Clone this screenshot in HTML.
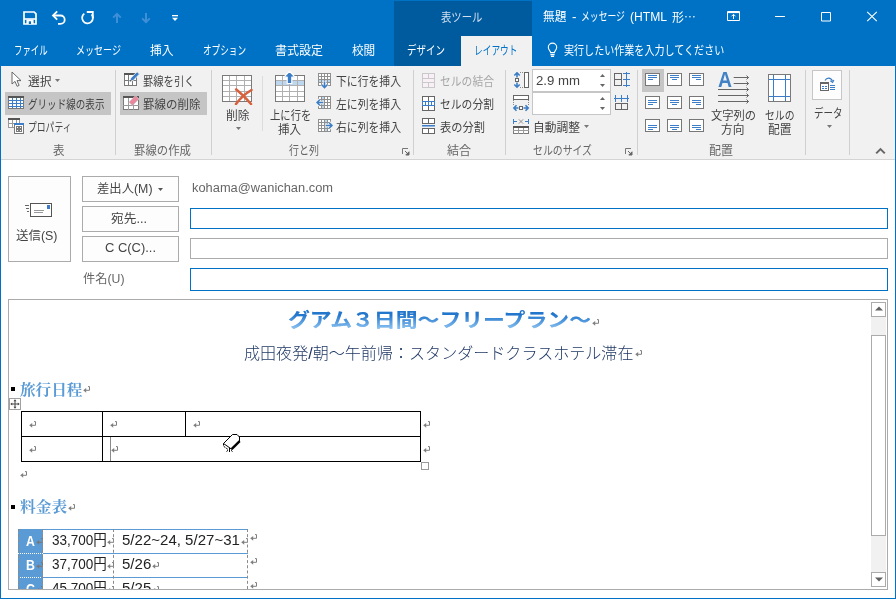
<!DOCTYPE html><html lang="ja"><head><meta charset="utf-8"><title>無題 - メッセージ (HTML 形式)</title><style>

html,body{margin:0;padding:0;}
body{width:896px;height:599px;overflow:hidden;background:#fff;position:relative;font-family:"Liberation Sans","Noto Sans CJK JP",sans-serif;}
.a{position:absolute;display:block;}
.t{position:absolute;white-space:nowrap;transform-origin:0 50%;font-feature-settings:"palt" 1;}

</style></head><body>
<div id="window-chrome">
<div class="a" style="left:0px;top:0px;width:896px;height:66px;background:#0072c6;"></div>
<div class="a" style="left:394px;top:1px;width:138px;height:65px;background:#005a9e;"></div>
<div class="a" style="left:0px;top:66px;width:896px;height:93px;background:#f1f1f1;"></div>
<div class="a" style="left:0px;top:159px;width:896px;height:1px;background:#d4d4d4;"></div>
<div class="a" style="left:461px;top:36px;width:71px;height:30px;background:#f1f1f1;"></div>
<div class="a" style="left:0px;top:66px;width:1px;height:533px;background:#0072c6;"></div>
<div class="a" style="left:895px;top:66px;width:1px;height:533px;background:#0072c6;"></div>
<div class="a" style="left:0px;top:598px;width:896px;height:1px;background:#0072c6;"></div>
</div>
<header id="titlebar">
<span class="t" style="left:441px;top:9.50px;font:400 12px/16px &quot;Liberation Sans&quot;,&quot;Noto Sans CJK JP&quot;,sans-serif;color:#cfe0f0;transform:scaleX(0.8643);">表ツール</span>
<span class="t" style="left:543px;top:9.00px;font:400 12px/16px &quot;Liberation Sans&quot;,&quot;Noto Sans CJK JP&quot;,sans-serif;color:#ffffff;transform:scaleX(0.9785);">無題</span>
<span class="t" style="left:571.5px;top:9.00px;font:400 12px/16px &quot;Liberation Sans&quot;,&quot;Noto Sans CJK JP&quot;,sans-serif;color:#ffffff;transform:scaleX(1.1250);">-</span>
<span class="t" style="left:580.6px;top:9.00px;font:400 12px/16px &quot;Liberation Sans&quot;,&quot;Noto Sans CJK JP&quot;,sans-serif;color:#ffffff;transform:scaleX(0.7345);">メッセージ</span>
<span class="t" style="left:630px;top:9.00px;font:400 12px/16px &quot;Liberation Sans&quot;,&quot;Noto Sans CJK JP&quot;,sans-serif;color:#ffffff;transform:scaleX(1.0089);">(HTML</span>
<span class="t" style="left:672.2px;top:9.00px;font:400 12px/16px &quot;Liberation Sans&quot;,&quot;Noto Sans CJK JP&quot;,sans-serif;color:#ffffff;transform:scaleX(0.9904);">形<span style="font-family:'Noto Sans CJK JP',sans-serif">…</span></span>
<svg class="a" style="left:23px;top:11px;" width="14" height="14" viewBox="0 0 14 14"><path d="M1 1h10.2L13 2.8V13H1z" fill="none" stroke="#fff" stroke-width="1.7" /><path d="M1 7.2h12v1.6H1z" fill="#fff"/><path d="M3.4 8.5h7.2V13H3.4z" fill="#fff"/><rect x="5.8" y="10.3" width="2.2" height="2.7" fill="#0072c6"/></svg>
<svg class="a" style="left:51px;top:10px;" width="16" height="15" viewBox="0 0 16 15"><path d="M2.2 5.5h7.3a4.2 4.2 0 0 1 0 8.4H7" fill="none" stroke="#fff" stroke-width="1.8" /><path d="M6.2 1.3L2 5.5l4.2 4.2" fill="none" stroke="#fff" stroke-width="1.8" /></svg>
<svg class="a" style="left:80px;top:10px;" width="16" height="16" viewBox="0 0 16 16"><path d="M4.3 3.6A5.4 5.4 0 1 0 11.6 4.4" fill="none" stroke="#fff" stroke-width="1.8" /><path d="M6.8 2h6v6" fill="none" stroke="#fff" stroke-width="1.8" /></svg>
<svg class="a" style="left:112px;top:12px;" width="10" height="12" viewBox="0 0 10 12"><path d="M5 11V1.8M1.2 5.6l3.8-3.8 3.8 3.8" fill="none" stroke="#3f8fd6" stroke-width="2" /></svg>
<svg class="a" style="left:141px;top:12px;" width="10" height="12" viewBox="0 0 10 12"><path d="M5 1v9.2M1.2 6.4l3.8 3.8 3.8-3.8" fill="none" stroke="#3f8fd6" stroke-width="2" /></svg>
<svg class="a" style="left:171px;top:14px;" width="8" height="8" viewBox="0 0 8 8"><rect x="1" y="1" width="6" height="1.3" fill="#fff"/><path d="M1 3.8h6L4 7z" fill="#fff"/></svg>
<svg class="a" style="left:726px;top:10px;" width="15" height="12" viewBox="0 0 15 12"><path d="M1.5 1.5h12v9h-12z" fill="none" stroke="#fff" stroke-width="1" /><path d="M1 2.5h13" fill="none" stroke="#fff" stroke-width="1.2" /><path d="M7.5 9V4.5M5.5 6.3l2-2 2 2" fill="none" stroke="#fff" stroke-width="1" /></svg>
<div class="a" style="left:775px;top:16px;width:10px;height:1px;background:#fff;"></div>
<svg class="a" style="left:820px;top:11px;" width="12" height="11" viewBox="0 0 12 11"><path d="M1.5 1.5h9v8.5h-9z" fill="none" stroke="#fff" stroke-width="1" /></svg>
<svg class="a" style="left:866px;top:11px;" width="12" height="11" viewBox="0 0 12 11"><path d="M1.2 .8l9.6 9.4M10.8 .8L1.2 10.2" fill="none" stroke="#fff" stroke-width="1.1" /></svg>
</header>
<nav id="ribbon-tabs">
<span class="t" style="left:13.75px;top:43.00px;font:400 12px/16px &quot;Liberation Sans&quot;,&quot;Noto Sans CJK JP&quot;,sans-serif;color:#ffffff;transform:scaleX(0.7029);">ファイル</span>
<span class="t" style="left:76px;top:43.00px;font:400 12px/16px &quot;Liberation Sans&quot;,&quot;Noto Sans CJK JP&quot;,sans-serif;color:#ffffff;transform:scaleX(0.7529);">メッセージ</span>
<span class="t" style="left:149.5px;top:43.00px;font:400 12px/16px &quot;Liberation Sans&quot;,&quot;Noto Sans CJK JP&quot;,sans-serif;color:#ffffff;transform:scaleX(0.9785);">挿入</span>
<span class="t" style="left:203px;top:43.00px;font:400 12px/16px &quot;Liberation Sans&quot;,&quot;Noto Sans CJK JP&quot;,sans-serif;color:#ffffff;transform:scaleX(0.7165);">オプション</span>
<span class="t" style="left:275px;top:43.00px;font:400 12px/16px &quot;Liberation Sans&quot;,&quot;Noto Sans CJK JP&quot;,sans-serif;color:#ffffff;transform:scaleX(0.9997);">書式設定</span>
<span class="t" style="left:351.75px;top:43.00px;font:400 12px/16px &quot;Liberation Sans&quot;,&quot;Noto Sans CJK JP&quot;,sans-serif;color:#ffffff;transform:scaleX(0.9681);">校閲</span>
<span class="t" style="left:407px;top:43.00px;font:400 12px/16px &quot;Liberation Sans&quot;,&quot;Noto Sans CJK JP&quot;,sans-serif;color:#ffffff;transform:scaleX(0.7914);">デザイン</span>
<span class="t" style="left:474px;top:43.00px;font:400 12px/16px &quot;Liberation Sans&quot;,&quot;Noto Sans CJK JP&quot;,sans-serif;color:#0072c6;transform:scaleX(0.7248);">レイアウト</span>
<span class="t" style="left:563.75px;top:43.00px;font:400 12px/16px &quot;Liberation Sans&quot;,&quot;Noto Sans CJK JP&quot;,sans-serif;color:#ffffff;transform:scaleX(0.8377);">実行したい作業を入力してください</span>
<svg class="a" style="left:547px;top:42px;" width="11" height="16" viewBox="0 0 11 16"><path d="M3.6 10.6c0-1.6-2.3-2.7-2.3-5.3a4.2 4.2 0 0 1 8.4 0c0 2.6-2.3 3.7-2.3 5.3z" fill="none" stroke="#fff" stroke-width="1.1" /><path d="M3.4 12.6h4.2M3.9 14.4h3.2" fill="none" stroke="#fff" stroke-width="1.1" /></svg>
</nav>
<section id="ribbon">
<div class="a" style="left:115px;top:70px;width:1px;height:85px;background:#d0d0d0;"></div>
<div class="a" style="left:211px;top:70px;width:1px;height:85px;background:#d0d0d0;"></div>
<div class="a" style="left:413px;top:70px;width:1px;height:85px;background:#d0d0d0;"></div>
<div class="a" style="left:505px;top:70px;width:1px;height:85px;background:#d0d0d0;"></div>
<div class="a" style="left:637px;top:70px;width:1px;height:85px;background:#d0d0d0;"></div>
<div class="a" style="left:805px;top:70px;width:1px;height:85px;background:#d0d0d0;"></div>
<div class="a" style="left:849px;top:70px;width:1px;height:85px;background:#d0d0d0;"></div>
<div class="a" style="left:262px;top:76px;width:1px;height:55px;background:#dcdcdc;"></div>
<div class="a" style="left:5px;top:92px;width:106px;height:23px;background:#c5c5c5;"></div>
<div class="a" style="left:120px;top:92px;width:87px;height:23px;background:#c5c5c5;"></div>
<div class="a" style="left:642px;top:69px;width:22px;height:23px;background:#c5c5c5;"></div>
<span class="t" style="left:27.5px;top:74.00px;font:400 12px/16px &quot;Liberation Sans&quot;,&quot;Noto Sans CJK JP&quot;,sans-serif;color:#444444;transform:scaleX(0.9785);">選択</span>
<span class="t" style="left:27.5px;top:97.00px;font:400 12px/16px &quot;Liberation Sans&quot;,&quot;Noto Sans CJK JP&quot;,sans-serif;color:#444444;transform:scaleX(0.7967);">グリッド線の表示</span>
<span class="t" style="left:27.5px;top:119.50px;font:400 12px/16px &quot;Liberation Sans&quot;,&quot;Noto Sans CJK JP&quot;,sans-serif;color:#444444;transform:scaleX(0.7338);">プロパティ</span>
<span class="t" style="left:52.5px;top:143.00px;font:400 12px/16px &quot;Liberation Sans&quot;,&quot;Noto Sans CJK JP&quot;,sans-serif;color:#666666;transform:scaleX(0.9571);">表</span>
<span class="t" style="left:142.5px;top:74.00px;font:400 12px/16px &quot;Liberation Sans&quot;,&quot;Noto Sans CJK JP&quot;,sans-serif;color:#444444;transform:scaleX(0.8581);">罫線を引く</span>
<span class="t" style="left:142.5px;top:97.00px;font:400 12px/16px &quot;Liberation Sans&quot;,&quot;Noto Sans CJK JP&quot;,sans-serif;color:#444444;transform:scaleX(0.9581);">罫線の削除</span>
<span class="t" style="left:134px;top:143.00px;font:400 12px/16px &quot;Liberation Sans&quot;,&quot;Noto Sans CJK JP&quot;,sans-serif;color:#666666;transform:scaleX(0.9498);">罫線の作成</span>
<span class="t" style="left:225.5px;top:107.50px;font:400 12px/16px &quot;Liberation Sans&quot;,&quot;Noto Sans CJK JP&quot;,sans-serif;color:#444444;transform:scaleX(0.9785);">削除</span>
<span class="t" style="left:269.6px;top:108.00px;font:400 12px/16px &quot;Liberation Sans&quot;,&quot;Noto Sans CJK JP&quot;,sans-serif;color:#444444;transform:scaleX(0.8622);">上に行を</span>
<span class="t" style="left:278px;top:121.50px;font:400 12px/16px &quot;Liberation Sans&quot;,&quot;Noto Sans CJK JP&quot;,sans-serif;color:#444444;transform:scaleX(0.9577);">挿入</span>
<span class="t" style="left:336px;top:74.00px;font:400 12px/16px &quot;Liberation Sans&quot;,&quot;Noto Sans CJK JP&quot;,sans-serif;color:#444444;transform:scaleX(0.9026);">下に行を挿入</span>
<span class="t" style="left:336px;top:97.00px;font:400 12px/16px &quot;Liberation Sans&quot;,&quot;Noto Sans CJK JP&quot;,sans-serif;color:#444444;transform:scaleX(0.9026);">左に列を挿入</span>
<span class="t" style="left:336px;top:119.50px;font:400 12px/16px &quot;Liberation Sans&quot;,&quot;Noto Sans CJK JP&quot;,sans-serif;color:#444444;transform:scaleX(0.9026);">右に列を挿入</span>
<span class="t" style="left:289px;top:143.00px;font:400 12px/16px &quot;Liberation Sans&quot;,&quot;Noto Sans CJK JP&quot;,sans-serif;color:#666666;transform:scaleX(0.8330);">行と列</span>
<span class="t" style="left:440px;top:74.00px;font:400 12px/16px &quot;Liberation Sans&quot;,&quot;Noto Sans CJK JP&quot;,sans-serif;color:#a6a6a6;transform:scaleX(0.8998);">セルの結合</span>
<span class="t" style="left:440px;top:97.00px;font:400 12px/16px &quot;Liberation Sans&quot;,&quot;Noto Sans CJK JP&quot;,sans-serif;color:#444444;transform:scaleX(0.8998);">セルの分割</span>
<span class="t" style="left:440px;top:119.50px;font:400 12px/16px &quot;Liberation Sans&quot;,&quot;Noto Sans CJK JP&quot;,sans-serif;color:#444444;transform:scaleX(0.9372);">表の分割</span>
<span class="t" style="left:447px;top:143.00px;font:400 12px/16px &quot;Liberation Sans&quot;,&quot;Noto Sans CJK JP&quot;,sans-serif;color:#666666;transform:scaleX(0.9993);">結合</span>
<div class="a" style="left:532px;top:69px;width:79px;height:23px;background:#ffffff;border:1px solid #c6c6c6;box-sizing:border-box;"></div>
<div class="a" style="left:532px;top:92px;width:79px;height:23px;background:#ffffff;border:1px solid #c6c6c6;box-sizing:border-box;"></div>
<span class="t" style="left:536px;top:73.00px;font:400 12px/16px &quot;Liberation Sans&quot;,&quot;Noto Sans CJK JP&quot;,sans-serif;color:#444444;transform:scaleX(1.0996);">2.9 mm</span>
<span class="t" style="left:532.5px;top:119.50px;font:400 12px/16px &quot;Liberation Sans&quot;,&quot;Noto Sans CJK JP&quot;,sans-serif;color:#444444;transform:scaleX(0.9788);">自動調整</span>
<span class="t" style="left:533px;top:143.00px;font:400 12px/16px &quot;Liberation Sans&quot;,&quot;Noto Sans CJK JP&quot;,sans-serif;color:#666666;transform:scaleX(0.8236);">セルのサイズ</span>
<span class="t" style="left:710.5px;top:108.00px;font:400 12px/16px &quot;Liberation Sans&quot;,&quot;Noto Sans CJK JP&quot;,sans-serif;color:#444444;transform:scaleX(0.9372);">文字列の</span>
<span class="t" style="left:721px;top:121.50px;font:400 12px/16px &quot;Liberation Sans&quot;,&quot;Noto Sans CJK JP&quot;,sans-serif;color:#444444;transform:scaleX(0.9785);">方向</span>
<span class="t" style="left:765px;top:108.00px;font:400 12px/16px &quot;Liberation Sans&quot;,&quot;Noto Sans CJK JP&quot;,sans-serif;color:#444444;transform:scaleX(0.8191);">セルの</span>
<span class="t" style="left:767.5px;top:121.50px;font:400 12px/16px &quot;Liberation Sans&quot;,&quot;Noto Sans CJK JP&quot;,sans-serif;color:#444444;transform:scaleX(0.9785);">配置</span>
<span class="t" style="left:709px;top:143.00px;font:400 12px/16px &quot;Liberation Sans&quot;,&quot;Noto Sans CJK JP&quot;,sans-serif;color:#666666;transform:scaleX(0.9993);">配置</span>
<div class="a" style="left:812px;top:70px;width:30px;height:30px;background:#fdfdfd;border:1px solid #c6c6c6;box-sizing:border-box;"></div>
<span class="t" style="left:814px;top:105.50px;font:400 12px/16px &quot;Liberation Sans&quot;,&quot;Noto Sans CJK JP&quot;,sans-serif;color:#444444;transform:scaleX(0.7913);">データ</span>
<svg class="a" style="left:11px;top:71px;" width="11" height="17" viewBox="0 0 11 17"><path d="M1 1v12l3-2.6 2.1 4.9 2-.9-2.1-4.8H10z" fill="#fff" stroke="#5a5a5a" stroke-width=".9" stroke-linejoin="round"/></svg>
<svg class="a" style="left:55px;top:79px;" width="5" height="3" viewBox="0 0 5 3"><path d="M0 0h5L2.5 3z" fill="#777777"/></svg>
<svg class="a" style="left:8px;top:96px;" width="16" height="13" viewBox="0 0 16 13"><g shape-rendering="crispEdges"><rect x=".5" y=".5" width="15" height="12" fill="#fff" stroke="#7a7a7a"/><rect x="0" y="0" width="16" height="2" fill="#555555"/><path d="M1 4.5h14M1 7.5h14M1 10.5h14M4.5 2v10M8.5 2v10M12.500 2v10" stroke="#3b7dc6" stroke-width="1"/></g></svg>
<svg class="a" style="left:8px;top:118px;" width="16" height="16" viewBox="0 0 16 16"><g shape-rendering="crispEdges"><rect x=".5" y=".5" width="11" height="9" fill="#fff" stroke="#9a9a9a"/><rect x="0" y="0" width="12" height="2" fill="#555555"/><path d="M4.5 2v8M8.5 2v8M0 5.5h12" stroke="#9a9a9a"/><rect x="6.500" y="5.5" width="9" height="10" fill="#fff" stroke="#7a7a7a"/><rect x="6" y="5" width="10" height="2" fill="#3b7dc6"/><rect x="8.500" y="8.500" width="2" height="2" fill="none" stroke="#7a7a7a"/><rect x="11.500" y="8.500" width="2" height="2" fill="none" stroke="#7a7a7a"/><rect x="8.500" y="11.500" width="2" height="2" fill="none" stroke="#7a7a7a"/><rect x="11.500" y="11.500" width="2" height="2" fill="none" stroke="#7a7a7a"/></g></svg>
<svg class="a" style="left:124px;top:71px;" width="16" height="16" viewBox="0 0 16 16"><g shape-rendering="crispEdges"><rect x=".5" y="2.5" width="12" height="12" fill="#fff" stroke="#7a7a7a"/><rect x="0" y="2" width="13" height="2" fill="#555555"/><path d="M4.5 4v11M8.5 9v6M0 9.500h13" stroke="#7a7a7a"/></g><path d="M5.800 10.400l1-3.400 6.300-6.300 2.400 2.400-6.300 6.300z" fill="#3b7dc6" stroke="#f1f1f1" stroke-width=".9"/><path d="M5.800 10.400l.5-1.700 1.200 1.200z" fill="#444"/></svg>
<svg class="a" style="left:123px;top:95px;" width="17" height="16" viewBox="0 0 17 16"><g shape-rendering="crispEdges"><rect x=".5" y="1.5" width="15" height="13" fill="#fff" stroke="#7a7a7a"/><rect x="0" y="1" width="16" height="2" fill="#555555"/><path d="M5.500 3v12M10.500 9v6M0 10.500h16" stroke="#9a9a9a"/></g><path d="M6 7.200L12.600 .600l3.400 3.400L9.400 10.600z" fill="#e8899e" stroke="#c5c5c5" stroke-width=".7"/></svg>
<svg class="a" style="left:222px;top:75px;" width="32" height="30" viewBox="0 0 32 30"><g shape-rendering="crispEdges"><rect x=".5" y=".5" width="29" height="26" fill="#fff" stroke="#7a7a7a"/><path d="M7.5 1v25M14.5 1v25M22.5 1v25M1 5.5h28M1 10.5h28M1 16.5h28M1 21.5h28" stroke="#b0b0b0"/></g><path d="M14.2 14.500c4.500 3.500 9.500 8.500 14.800 14.500M29.500 15c-5.500 3.200-11 8-15.500 14" fill="none" stroke="#d8603c" stroke-width="2.600" stroke-linecap="round"/></svg>
<svg class="a" style="left:236px;top:127px;" width="5" height="3" viewBox="0 0 5 3"><path d="M0 0h5L2.5 3z" fill="#777777"/></svg>
<svg class="a" style="left:275px;top:71px;" width="30" height="31" viewBox="0 0 30 31"><g transform="translate(0,4)"><g shape-rendering="crispEdges"><rect x=".5" y=".5" width="29" height="26" fill="#fff" stroke="#7a7a7a"/><rect x="1" y="6.2" width="28" height="5" fill="#bdd7ee"/><path d="M7.5 1v25M14.5 1v25M22.5 1v25M1 5.5h28M1 10.5h28M1 16.5h28M1 21.5h28" stroke="#b0b0b0"/></g></g><path d="M14.500 .3l5.600 5.900h-3.300v6.300h-4.600V6.200H8.900z" fill="#3b7dc6" stroke="#fff" stroke-width="1.200" stroke-linejoin="round"/></svg>
<svg class="a" style="left:318px;top:73px;" width="14" height="16" viewBox="0 0 14 16"><g shape-rendering="crispEdges"><rect x="0" y="0" width="13" height="13" fill="#8f8f8f"/><rect x="1" y="1" width="2" height="2" fill="#fff"/><rect x="4" y="1" width="2" height="2" fill="#fff"/><rect x="7" y="1" width="2" height="2" fill="#fff"/><rect x="10" y="1" width="2" height="2" fill="#fff"/><rect x="1" y="4" width="2" height="2" fill="#fff"/><rect x="4" y="4" width="2" height="2" fill="#fff"/><rect x="7" y="4" width="2" height="2" fill="#fff"/><rect x="10" y="4" width="2" height="2" fill="#fff"/><rect x="1" y="7" width="2" height="2" fill="#bdd7ee"/><rect x="4" y="7" width="2" height="2" fill="#bdd7ee"/><rect x="7" y="7" width="2" height="2" fill="#bdd7ee"/><rect x="10" y="7" width="2" height="2" fill="#bdd7ee"/><rect x="1" y="10" width="2" height="2" fill="#fff"/><rect x="4" y="10" width="2" height="2" fill="#fff"/><rect x="7" y="10" width="2" height="2" fill="#fff"/><rect x="10" y="10" width="2" height="2" fill="#fff"/></g><path d="M6.500 8v6.500M3.700 11.800l2.800 2.800 2.800-2.800" fill="none" stroke="#f1f1f1" stroke-width="3.600"/><path d="M6.500 8.500v6M3.700 11.800l2.800 2.800 2.800-2.800" fill="none" stroke="#3b7dc6" stroke-width="1.500"/></svg>
<svg class="a" style="left:316px;top:96px;" width="16" height="13" viewBox="0 0 16 13"><g transform="translate(2,0)"><g shape-rendering="crispEdges"><rect x="0" y="0" width="13" height="13" fill="#8f8f8f"/><rect x="1" y="1" width="2" height="2" fill="#fff"/><rect x="4" y="1" width="2" height="2" fill="#bdd7ee"/><rect x="7" y="1" width="2" height="2" fill="#fff"/><rect x="10" y="1" width="2" height="2" fill="#fff"/><rect x="1" y="4" width="2" height="2" fill="#fff"/><rect x="4" y="4" width="2" height="2" fill="#bdd7ee"/><rect x="7" y="4" width="2" height="2" fill="#fff"/><rect x="10" y="4" width="2" height="2" fill="#fff"/><rect x="1" y="7" width="2" height="2" fill="#fff"/><rect x="4" y="7" width="2" height="2" fill="#bdd7ee"/><rect x="7" y="7" width="2" height="2" fill="#fff"/><rect x="10" y="7" width="2" height="2" fill="#fff"/><rect x="1" y="10" width="2" height="2" fill="#fff"/><rect x="4" y="10" width="2" height="2" fill="#bdd7ee"/><rect x="7" y="10" width="2" height="2" fill="#fff"/><rect x="10" y="10" width="2" height="2" fill="#fff"/></g></g><path d="M7.500 6.500H1M3.800 3.700L1 6.500l2.800 2.800" fill="none" stroke="#f1f1f1" stroke-width="3.600"/><path d="M7 6.500H1M3.800 3.700L1 6.500l2.800 2.800" fill="none" stroke="#3b7dc6" stroke-width="1.500"/></svg>
<svg class="a" style="left:318px;top:119px;" width="16" height="13" viewBox="0 0 16 13"><g shape-rendering="crispEdges"><rect x="0" y="0" width="13" height="13" fill="#8f8f8f"/><rect x="1" y="1" width="2" height="2" fill="#fff"/><rect x="4" y="1" width="2" height="2" fill="#fff"/><rect x="7" y="1" width="2" height="2" fill="#bdd7ee"/><rect x="10" y="1" width="2" height="2" fill="#fff"/><rect x="1" y="4" width="2" height="2" fill="#fff"/><rect x="4" y="4" width="2" height="2" fill="#fff"/><rect x="7" y="4" width="2" height="2" fill="#bdd7ee"/><rect x="10" y="4" width="2" height="2" fill="#fff"/><rect x="1" y="7" width="2" height="2" fill="#fff"/><rect x="4" y="7" width="2" height="2" fill="#fff"/><rect x="7" y="7" width="2" height="2" fill="#bdd7ee"/><rect x="10" y="7" width="2" height="2" fill="#fff"/><rect x="1" y="10" width="2" height="2" fill="#fff"/><rect x="4" y="10" width="2" height="2" fill="#fff"/><rect x="7" y="10" width="2" height="2" fill="#bdd7ee"/><rect x="10" y="10" width="2" height="2" fill="#fff"/></g><path d="M7.500 6.500h6.500M11.200 3.700l2.800 2.800-2.800 2.800" fill="none" stroke="#f1f1f1" stroke-width="3.600"/><path d="M8 6.500h6M11.200 3.700l2.800 2.800-2.800 2.800" fill="none" stroke="#3b7dc6" stroke-width="1.500"/></svg>
<svg class="a" style="left:422px;top:73px;" width="13" height="15" viewBox="0 0 13 15"><g shape-rendering="crispEdges"><rect x=".5" y=".5" width="12" height="14" fill="#f8f0f6" stroke="#c9c9c9"/><path d="M0 5.500h13M0 9.500h13M6.500 0v5M6.500 10v5" stroke="#c9c9c9"/></g></svg>
<svg class="a" style="left:422px;top:96px;" width="13" height="15" viewBox="0 0 13 15"><g shape-rendering="crispEdges"><rect x=".5" y=".5" width="12" height="14" fill="#fff" stroke="#666"/><path d="M6.500 0v15" stroke="#666"/><rect x=".5" y="5.500" width="12" height="4" fill="#fff" stroke="#3b7dc6"/><path d="M3.500 6v4M6.500 6v4M9.500 6v4" stroke="#3b7dc6"/></g></svg>
<svg class="a" style="left:422px;top:118px;" width="13" height="16" viewBox="0 0 13 16"><g shape-rendering="crispEdges"><rect x=".5" y=".5" width="12" height="5" fill="#fff" stroke="#666"/><rect x=".5" y="10.500" width="12" height="5" fill="#fff" stroke="#666"/><path d="M6.500 0v6M6.500 10v6" stroke="#666"/><path d="M0 7.500h13" stroke="#3b7dc6" stroke-width="1"/><path d="M0 8.500h13" stroke="#8fb5e0" stroke-width="1"/></g></svg>
<svg class="a" style="left:513px;top:72px;" width="17" height="17" viewBox="0 0 17 17"><g shape-rendering="crispEdges"><rect x="11.500" y=".5" width="4" height="15" fill="#fff" stroke="#666"/><path d="M7 .5h4M7 15.500h4" stroke="#888" stroke-dasharray="1 1"/><rect x="2.500" y="6.500" width="3" height="3" fill="#fff" stroke="#666"/></g><path d="M4 1v4.500M1.300 3.500L4 .8l2.700 2.700M4 15v-4.500M1.300 12.500L4 15.200l2.700-2.700" fill="none" stroke="#3b7dc6" stroke-width="1.600"/></svg>
<svg class="a" style="left:513px;top:95px;" width="17" height="17" viewBox="0 0 17 17"><g shape-rendering="crispEdges"><rect x=".5" y=".5" width="15" height="4" fill="#fff" stroke="#666"/><path d="M.5 5v6M15.500 5v6" stroke="#888" stroke-dasharray="1 1"/><rect x="6.500" y="11.500" width="3" height="3" fill="#fff" stroke="#666"/></g><path d="M1 13h4.500M3.500 10.300L.8 13l2.700 2.700M15 13h-4.500M12.500 10.300l2.700 2.700-2.700 2.700" fill="none" stroke="#3b7dc6" stroke-width="1.600"/></svg>
<svg class="a" style="left:513px;top:118px;" width="17" height="16" viewBox="0 0 17 16"><g shape-rendering="crispEdges"><path d="M.5 1v5M15.500 1v5M0 3.500h4M12 3.500h4" stroke="#3b7dc6"/><rect x=".5" y="8.500" width="15" height="7" fill="#fff" stroke="#7a7a7a"/><rect x="0" y="8" width="16" height="2" fill="#555555"/><path d="M5.500 10v6M10.500 10v6M0 12.500h16" stroke="#9a9a9a"/></g><path d="M5.800 1.300l4.400 4.400M10.200 1.300L5.800 5.700" stroke="#888" stroke-width=".9"/></svg>
<svg class="a" style="left:584px;top:125px;" width="5" height="3" viewBox="0 0 5 3"><path d="M0 0h5L2.5 3z" fill="#777777"/></svg>
<svg class="a" style="left:600px;top:74px;" width="5" height="3" viewBox="0 0 5 3"><path d="M0 3h5L2.500 0z" fill="#666"/></svg>
<svg class="a" style="left:600px;top:84px;" width="5" height="3" viewBox="0 0 5 3"><path d="M0 0h5L2.500 3z" fill="#666"/></svg>
<svg class="a" style="left:600px;top:97px;" width="5" height="3" viewBox="0 0 5 3"><path d="M0 3h5L2.500 0z" fill="#666"/></svg>
<svg class="a" style="left:600px;top:107px;" width="5" height="3" viewBox="0 0 5 3"><path d="M0 0h5L2.500 3z" fill="#666"/></svg>
<svg class="a" style="left:614px;top:72px;" width="17" height="15" viewBox="0 0 17 15"><g shape-rendering="crispEdges"><rect x=".5" y="1.500" width="7" height="12" fill="#f1f1f1" stroke="#666"/><path d="M0 7.500h8" stroke="#666"/><path d="M12.500 0v15M9 1.500h7M9 7.500h7M9 13.500h7" stroke="#3b7dc6"/></g></svg>
<svg class="a" style="left:614px;top:95px;" width="15" height="16" viewBox="0 0 15 16"><g shape-rendering="crispEdges"><rect x="1.500" y="8.500" width="12" height="6" fill="#f1f1f1" stroke="#666"/><path d="M7.500 8v7" stroke="#666"/><path d="M0 3.500h15M1.500 0v7M7.500 0v7M13.500 0v7" stroke="#3b7dc6"/></g></svg>
<svg class="a" style="left:645px;top:73px;" width="15" height="13" viewBox="0 0 15 13"><g shape-rendering="crispEdges"><rect x=".5" y=".5" width="14" height="12" fill="#fff" stroke="#777"/><rect x="3" y="2" width="9" height="1" fill="#3b7dc6"/><rect x="3" y="4" width="9" height="1" fill="#3b7dc6"/><rect x="3" y="6" width="5" height="1" fill="#3b7dc6"/></g></svg>
<svg class="a" style="left:667px;top:73px;" width="15" height="13" viewBox="0 0 15 13"><g shape-rendering="crispEdges"><rect x=".5" y=".5" width="14" height="12" fill="#fff" stroke="#777"/><rect x="3" y="2" width="9" height="1" fill="#3b7dc6"/><rect x="3" y="4" width="9" height="1" fill="#3b7dc6"/><rect x="5" y="6" width="5" height="1" fill="#3b7dc6"/></g></svg>
<svg class="a" style="left:689px;top:73px;" width="15" height="13" viewBox="0 0 15 13"><g shape-rendering="crispEdges"><rect x=".5" y=".5" width="14" height="12" fill="#fff" stroke="#777"/><rect x="3" y="2" width="9" height="1" fill="#3b7dc6"/><rect x="3" y="4" width="9" height="1" fill="#3b7dc6"/><rect x="7" y="6" width="5" height="1" fill="#3b7dc6"/></g></svg>
<svg class="a" style="left:645px;top:96px;" width="15" height="13" viewBox="0 0 15 13"><g shape-rendering="crispEdges"><rect x=".5" y=".5" width="14" height="12" fill="#fff" stroke="#777"/><rect x="3" y="4" width="9" height="1" fill="#3b7dc6"/><rect x="3" y="6" width="9" height="1" fill="#3b7dc6"/><rect x="3" y="8" width="5" height="1" fill="#3b7dc6"/></g></svg>
<svg class="a" style="left:667px;top:96px;" width="15" height="13" viewBox="0 0 15 13"><g shape-rendering="crispEdges"><rect x=".5" y=".5" width="14" height="12" fill="#fff" stroke="#777"/><rect x="3" y="4" width="9" height="1" fill="#3b7dc6"/><rect x="3" y="6" width="9" height="1" fill="#3b7dc6"/><rect x="5" y="8" width="5" height="1" fill="#3b7dc6"/></g></svg>
<svg class="a" style="left:689px;top:96px;" width="15" height="13" viewBox="0 0 15 13"><g shape-rendering="crispEdges"><rect x=".5" y=".5" width="14" height="12" fill="#fff" stroke="#777"/><rect x="3" y="4" width="9" height="1" fill="#3b7dc6"/><rect x="3" y="6" width="9" height="1" fill="#3b7dc6"/><rect x="7" y="8" width="5" height="1" fill="#3b7dc6"/></g></svg>
<svg class="a" style="left:645px;top:119px;" width="15" height="13" viewBox="0 0 15 13"><g shape-rendering="crispEdges"><rect x=".5" y=".5" width="14" height="12" fill="#fff" stroke="#777"/><rect x="3" y="6" width="9" height="1" fill="#3b7dc6"/><rect x="3" y="8" width="9" height="1" fill="#3b7dc6"/><rect x="3" y="10" width="5" height="1" fill="#3b7dc6"/></g></svg>
<svg class="a" style="left:667px;top:119px;" width="15" height="13" viewBox="0 0 15 13"><g shape-rendering="crispEdges"><rect x=".5" y=".5" width="14" height="12" fill="#fff" stroke="#777"/><rect x="3" y="6" width="9" height="1" fill="#3b7dc6"/><rect x="3" y="8" width="9" height="1" fill="#3b7dc6"/><rect x="5" y="10" width="5" height="1" fill="#3b7dc6"/></g></svg>
<svg class="a" style="left:689px;top:119px;" width="15" height="13" viewBox="0 0 15 13"><g shape-rendering="crispEdges"><rect x=".5" y=".5" width="14" height="12" fill="#fff" stroke="#777"/><rect x="3" y="6" width="9" height="1" fill="#3b7dc6"/><rect x="3" y="8" width="9" height="1" fill="#3b7dc6"/><rect x="7" y="10" width="5" height="1" fill="#3b7dc6"/></g></svg>
<svg class="a" style="left:717px;top:70px;" width="34" height="34" viewBox="0 0 34 34"><path d="M16.700 7.500h15M16.700 13.500h15M1 19.500h30.700M1 25.500h30.700M1 31.500h30.700" stroke="#666" stroke-width="1"/><path d="M29.500 5.500l2 2-2 2M29.500 11.500l2 2-2 2M29.500 17.500l2 2-2 2M29.500 23.500l2 2-2 2M29.500 29.500l2 2-2 2" fill="none" stroke="#666" stroke-width="1"/></svg>
<span class="t" style="left:717.5px;top:67.75px;font:700 21.5px/25.5px &quot;Liberation Sans&quot;,&quot;Noto Sans CJK JP&quot;,sans-serif;color:#4381c5;transform:scaleX(0.9014);">A</span>
<svg class="a" style="left:768px;top:74px;" width="23" height="28" viewBox="0 0 23 28"><g shape-rendering="crispEdges"><rect x=".5" y=".5" width="22" height="27" fill="#fff" stroke="#7a7a7a"/><path d="M5.500 1v26M17.500 1v26M1 5.500h21M1 22.500h21" stroke="#3b7dc6"/></g></svg>
<svg class="a" style="left:819px;top:76px;" width="17" height="17" viewBox="0 0 17 17"><g shape-rendering="crispEdges"><rect x="1" y="6.500" width="8" height="8" fill="#fff" stroke="#666"/><rect x=".5" y="6" width="9" height="2" fill="#666"/><path d="M2.500 10.500h2M5.500 10.500h2M2.500 12.500h2M5.500 12.500h2" stroke="#3b7dc6"/><path d="M11 9.500h5M11 11.500h5M11 13.500h5" stroke="#3b7dc6"/></g><path d="M6 4.500c1.500-3 6-3.500 7.500.8" fill="none" stroke="#3b7dc6" stroke-width="1.100"/><path d="M11.300 4.800l2.300 1.600 1.300-2.500" fill="none" stroke="#3b7dc6" stroke-width="1.100"/></svg>
<svg class="a" style="left:827px;top:125px;" width="5" height="3" viewBox="0 0 5 3"><path d="M0 0h5L2.5 3z" fill="#777777"/></svg>
<svg class="a" style="left:402px;top:148px;" width="8" height="8" viewBox="0 0 8 8"><path d="M.5 6V.5H6" fill="none" stroke="#777" stroke-width="1"/><path d="M3 3l4 4M7 3.800V7H3.800z" fill="#666" stroke="#666" stroke-width="1"/></svg>
<svg class="a" style="left:625px;top:148px;" width="8" height="8" viewBox="0 0 8 8"><path d="M.5 6V.5H6" fill="none" stroke="#777" stroke-width="1"/><path d="M3 3l4 4M7 3.800V7H3.800z" fill="#666" stroke="#666" stroke-width="1"/></svg>
<svg class="a" style="left:875px;top:147px;" width="11" height="8" viewBox="0 0 11 8"><path d="M1.200 6.400L5.500 2.100l4.300 4.300" fill="none" stroke="#666" stroke-width="2"/></svg>
</section>
<section id="message-header">
<div class="a" style="left:8px;top:176px;width:63px;height:86px;background:#fdfdfd;border:1px solid #ababab;box-sizing:border-box;"></div>
<div class="a" style="left:82px;top:176px;width:97px;height:26px;background:#fdfdfd;border:1px solid #ababab;box-sizing:border-box;"></div>
<div class="a" style="left:82px;top:206px;width:97px;height:26px;background:#fdfdfd;border:1px solid #ababab;box-sizing:border-box;"></div>
<div class="a" style="left:82px;top:236px;width:97px;height:26px;background:#fdfdfd;border:1px solid #ababab;box-sizing:border-box;"></div>
<span class="t" style="left:16px;top:228.00px;font:400 12px/16px &quot;Liberation Sans&quot;,&quot;Noto Sans CJK JP&quot;,sans-serif;color:#444444;transform:scaleX(1.0375);">送信(S)</span>
<span class="t" style="left:97px;top:181.00px;font:400 12px/16px &quot;Liberation Sans&quot;,&quot;Noto Sans CJK JP&quot;,sans-serif;color:#444444;transform:scaleX(1.0278);">差出人(M)</span>
<span class="t" style="left:111px;top:211.00px;font:400 12px/16px &quot;Liberation Sans&quot;,&quot;Noto Sans CJK JP&quot;,sans-serif;color:#444444;transform:scaleX(1.0583);">宛先...</span>
<span class="t" style="left:105px;top:240.00px;font:400 12px/16px &quot;Liberation Sans&quot;,&quot;Noto Sans CJK JP&quot;,sans-serif;color:#444444;transform:scaleX(1.0776);">C C(C)...</span>
<span class="t" style="left:192px;top:180.00px;font:400 12px/16px &quot;Liberation Sans&quot;,&quot;Noto Sans CJK JP&quot;,sans-serif;color:#666666;transform:scaleX(1.0716);">kohama@wanichan.com</span>
<span class="t" style="left:82.5px;top:271.00px;font:400 12px/16px &quot;Liberation Sans&quot;,&quot;Noto Sans CJK JP&quot;,sans-serif;color:#666666;transform:scaleX(1.0204);">件名(U)</span>
<div class="a" style="left:190px;top:208px;width:698px;height:21px;background:#ffffff;border:1px solid #0072c6;box-sizing:border-box;"></div>
<div class="a" style="left:190px;top:238px;width:698px;height:21px;background:#ffffff;border:1px solid #ababab;box-sizing:border-box;"></div>
<div class="a" style="left:190px;top:268px;width:698px;height:23px;background:#ffffff;border:1px solid #0072c6;box-sizing:border-box;"></div>
<svg class="a" style="left:24px;top:202px;" width="29" height="16" viewBox="0 0 29 16"><g shape-rendering="crispEdges"><rect x="6.500" y="1.500" width="21" height="13" fill="#fff" stroke="#555"/><rect x="23" y="3" width="3" height="4" fill="#3b7dc6"/><path d="M10 8.500h10M10 10.500h9" stroke="#999"/><path d="M1 3.500h4M2 6.500h3M3 9.500h2" stroke="#666"/></g></svg>
<svg class="a" style="left:158px;top:188px;" width="5" height="3" viewBox="0 0 5 3"><path d="M0 0h5L2.5 3z" fill="#555"/></svg>
</section>
<main id="message-body">
<div class="a" style="left:8px;top:299px;width:880px;height:291px;background:#ffffff;border:1px solid #ababab;box-sizing:border-box;"></div>
<div class="a" style="left:871px;top:302px;width:15px;height:285px;background:#f1f1f1;"></div>
<div class="a" style="left:871px;top:302px;width:15px;height:15px;background:#ffffff;border:1px solid #ababab;box-sizing:border-box;"></div>
<div class="a" style="left:871px;top:572px;width:15px;height:15px;background:#ffffff;border:1px solid #ababab;box-sizing:border-box;"></div>
<div class="a" style="left:871px;top:335px;width:15px;height:201px;background:#ffffff;border:1px solid #ababab;box-sizing:border-box;"></div>
<span class="t" style="left:288px;top:309.25px;font:700 19.5px/23.5px &quot;Liberation Sans&quot;,&quot;Noto Sans CJK JP&quot;,sans-serif;color:#2f7fd0;transform:scaleX(1.1203);background:linear-gradient(#2276cc 25%,#86c0f1 80%);-webkit-background-clip:text;background-clip:text;-webkit-text-fill-color:transparent;filter:drop-shadow(.5px .7px .6px rgba(70,130,200,.5));">グアム３日間～フリープラン～</span>
<svg class="a" style="left:592px;top:319px;" width="8" height="8" viewBox="0 0 8 8"><path d="M5 .6h1.500v3.700H2.500" fill="none" stroke="#7f7f7f" stroke-width="1"/><path d="M.2 4.300L3.200 1.900v4.800z" fill="#7f7f7f"/></svg>
<span class="t" style="left:244px;top:343.50px;font:300 16px/20px &quot;Liberation Sans&quot;,&quot;Noto Sans CJK JP&quot;,sans-serif;color:#1f3864;transform:scaleX(1.0035);">成田夜発/朝～午前帰：スタンダードクラスホテル滞在</span>
<svg class="a" style="left:634.5px;top:350px;" width="8" height="8" viewBox="0 0 8 8"><path d="M5 .6h1.500v3.700H2.500" fill="none" stroke="#7f7f7f" stroke-width="1"/><path d="M.2 4.300L3.200 1.900v4.800z" fill="#7f7f7f"/></svg>
<div class="a" style="left:11px;top:387px;width:4px;height:4px;background:#000;"></div>
<span class="t" style="left:19.8px;top:380.65px;font:700 14.7px/18.7px &quot;Liberation Serif&quot;,&quot;Noto Serif CJK SC&quot;,serif;color:#5b9bd5;transform:scaleX(1.0635);">旅行日程</span>
<svg class="a" style="left:83px;top:386px;" width="8" height="8" viewBox="0 0 8 8"><path d="M5 .6h1.500v3.700H2.500" fill="none" stroke="#7f7f7f" stroke-width="1"/><path d="M.2 4.300L3.200 1.900v4.800z" fill="#7f7f7f"/></svg>
<svg class="a" style="left:9px;top:398px;" width="12" height="12" viewBox="0 0 12 12"><rect x=".5" y=".5" width="11" height="11" fill="#fff" stroke="#a0a0a0" shape-rendering="crispEdges"/><path d="M6 2.500v7M2.500 6h7" stroke="#444" stroke-width="1"/><path d="M6 1.300L4.500 3.200h3zM6 10.700L4.500 8.800h3zM1.300 6L3.200 4.500v3zM10.700 6L8.800 4.500v3z" fill="#444"/></svg>
<div class="a" style="left:21px;top:411px;width:400px;height:1px;background:#000;"></div>
<div class="a" style="left:21px;top:436px;width:400px;height:1px;background:#000;"></div>
<div class="a" style="left:21px;top:461px;width:400px;height:1px;background:#000;"></div>
<div class="a" style="left:21px;top:411px;width:1px;height:51px;background:#000;"></div>
<div class="a" style="left:420px;top:411px;width:1px;height:51px;background:#000;"></div>
<div class="a" style="left:102px;top:411px;width:1px;height:51px;background:#000;"></div>
<div class="a" style="left:185px;top:411px;width:1px;height:26px;background:#000;"></div>
<div class="a" style="left:110px;top:437px;width:1px;height:24px;background:#8a8a8a;"></div>
<svg class="a" style="left:29px;top:421px;" width="8" height="8" viewBox="0 0 8 8"><path d="M5 .6h1.500v3.700H2.500" fill="none" stroke="#7f7f7f" stroke-width="1"/><path d="M.2 4.300L3.200 1.900v4.800z" fill="#7f7f7f"/></svg>
<svg class="a" style="left:110px;top:421px;" width="8" height="8" viewBox="0 0 8 8"><path d="M5 .6h1.500v3.700H2.500" fill="none" stroke="#7f7f7f" stroke-width="1"/><path d="M.2 4.300L3.200 1.900v4.800z" fill="#7f7f7f"/></svg>
<svg class="a" style="left:193px;top:421px;" width="8" height="8" viewBox="0 0 8 8"><path d="M5 .6h1.500v3.700H2.500" fill="none" stroke="#7f7f7f" stroke-width="1"/><path d="M.2 4.300L3.200 1.900v4.800z" fill="#7f7f7f"/></svg>
<svg class="a" style="left:422.5px;top:421px;" width="8" height="8" viewBox="0 0 8 8"><path d="M5 .6h1.500v3.700H2.500" fill="none" stroke="#7f7f7f" stroke-width="1"/><path d="M.2 4.300L3.200 1.900v4.800z" fill="#7f7f7f"/></svg>
<svg class="a" style="left:29px;top:446px;" width="8" height="8" viewBox="0 0 8 8"><path d="M5 .6h1.500v3.700H2.500" fill="none" stroke="#7f7f7f" stroke-width="1"/><path d="M.2 4.300L3.200 1.900v4.800z" fill="#7f7f7f"/></svg>
<svg class="a" style="left:110.5px;top:446px;" width="8" height="8" viewBox="0 0 8 8"><path d="M5 .6h1.500v3.700H2.500" fill="none" stroke="#7f7f7f" stroke-width="1"/><path d="M.2 4.300L3.200 1.900v4.800z" fill="#7f7f7f"/></svg>
<svg class="a" style="left:422.5px;top:446px;" width="8" height="8" viewBox="0 0 8 8"><path d="M5 .6h1.500v3.700H2.500" fill="none" stroke="#7f7f7f" stroke-width="1"/><path d="M.2 4.300L3.200 1.900v4.800z" fill="#7f7f7f"/></svg>
<svg class="a" style="left:421px;top:462px;" width="9" height="9" viewBox="0 0 9 9"><rect x=".5" y=".5" width="7" height="7" fill="#fff" stroke="#9a9a9a" shape-rendering="crispEdges"/></svg>
<svg class="a" style="left:20px;top:471px;" width="8" height="8" viewBox="0 0 8 8"><path d="M5 .6h1.500v3.700H2.500" fill="none" stroke="#7f7f7f" stroke-width="1"/><path d="M.2 4.300L3.200 1.900v4.800z" fill="#7f7f7f"/></svg>
<svg class="a" style="left:222px;top:432px;" width="20" height="22" viewBox="0 0 20 22"><path d="M10.500 2.500h4.500l2.500 2.500v4.400L9.800 17.300 1.500 11.500z" fill="#fff" stroke="#000" stroke-width="1"/><path d="M17.700 9.200L9.600 17.200" stroke="#000" stroke-width="2.400"/><path d="M1.500 11.500v2.700l5 3.600" fill="none" stroke="#000" stroke-width="1" stroke-dasharray="2 1"/><path d="M7.500 16v4M4.500 19.500l1.500-1.200M10.500 19.500L9 18.300" stroke="#000" stroke-width="1"/></svg>
<div class="a" style="left:11px;top:505px;width:4px;height:4px;background:#000;"></div>
<span class="t" style="left:19.8px;top:498.35px;font:700 14.7px/18.7px &quot;Liberation Serif&quot;,&quot;Noto Serif CJK SC&quot;,serif;color:#5b9bd5;transform:scaleX(1.0708);">料金表</span>
<svg class="a" style="left:67.5px;top:504px;" width="8" height="8" viewBox="0 0 8 8"><path d="M5 .6h1.500v3.700H2.500" fill="none" stroke="#7f7f7f" stroke-width="1"/><path d="M.2 4.300L3.200 1.900v4.800z" fill="#7f7f7f"/></svg>
<div class="a" style="left:9px;top:520px;width:861px;height:69px;overflow:hidden">
<div class="a" style="left:9px;top:9px;width:25px;height:25px;background:#5b9bd5;"></div>
<div class="a" style="left:9px;top:9px;width:230px;height:1px;background:#5b9bd5;"></div>
<span class="t" style="left:17.3px;top:11.00px;font:700 15px/19px &quot;Liberation Sans&quot;,&quot;Noto Sans CJK JP&quot;,sans-serif;color:#fff;transform:scaleX(0.8207);">A</span>
<span class="t" style="left:42.5px;top:11.15px;font:400 14.7px/18.7px &quot;Liberation Sans&quot;,&quot;Noto Sans CJK JP&quot;,sans-serif;color:#222;transform:scaleX(0.9208);">33,700円</span>
<span class="t" style="left:113.1px;top:11.15px;font:400 14.7px/18.7px &quot;Liberation Sans&quot;,&quot;Noto Sans CJK JP&quot;,sans-serif;color:#222;transform:scaleX(1.0237);">5/22~24, 5/27~31</span>
<svg class="a" style="left:27px;top:18px;" width="8" height="8" viewBox="0 0 8 8"><path d="M5 .6h1.500v3.700H2.500" fill="none" stroke="#777" stroke-width="1"/><path d="M.2 4.300L3.200 1.900v4.800z" fill="#777"/></svg>
<svg class="a" style="left:98px;top:18px;" width="8" height="8" viewBox="0 0 8 8"><path d="M5 .6h1.500v3.700H2.500" fill="none" stroke="#7f7f7f" stroke-width="1"/><path d="M.2 4.300L3.200 1.900v4.800z" fill="#7f7f7f"/></svg>
<svg class="a" style="left:232px;top:18px;" width="8" height="8" viewBox="0 0 8 8"><path d="M5 .6h1.500v3.700H2.500" fill="none" stroke="#7f7f7f" stroke-width="1"/><path d="M.2 4.300L3.200 1.900v4.800z" fill="#7f7f7f"/></svg>
<svg class="a" style="left:240.5px;top:14px;" width="8" height="8" viewBox="0 0 8 8"><path d="M5 .6h1.500v3.700H2.500" fill="none" stroke="#7f7f7f" stroke-width="1"/><path d="M.2 4.300L3.200 1.900v4.800z" fill="#7f7f7f"/></svg>
<div class="a" style="left:9px;top:33px;width:25px;height:25px;background:#5b9bd5;"></div>
<div class="a" style="left:9px;top:33px;width:230px;height:1px;background:#5b9bd5;"></div>
<span class="t" style="left:17.3px;top:35.00px;font:700 15px/19px &quot;Liberation Sans&quot;,&quot;Noto Sans CJK JP&quot;,sans-serif;color:#fff;transform:scaleX(0.8207);">B</span>
<span class="t" style="left:42.5px;top:35.15px;font:400 14.7px/18.7px &quot;Liberation Sans&quot;,&quot;Noto Sans CJK JP&quot;,sans-serif;color:#222;transform:scaleX(0.9208);">37,700円</span>
<span class="t" style="left:113.1px;top:35.15px;font:400 14.7px/18.7px &quot;Liberation Sans&quot;,&quot;Noto Sans CJK JP&quot;,sans-serif;color:#222;transform:scaleX(1.0247);">5/26</span>
<svg class="a" style="left:27px;top:42px;" width="8" height="8" viewBox="0 0 8 8"><path d="M5 .6h1.500v3.700H2.500" fill="none" stroke="#777" stroke-width="1"/><path d="M.2 4.300L3.200 1.900v4.800z" fill="#777"/></svg>
<svg class="a" style="left:98px;top:42px;" width="8" height="8" viewBox="0 0 8 8"><path d="M5 .6h1.500v3.700H2.500" fill="none" stroke="#7f7f7f" stroke-width="1"/><path d="M.2 4.300L3.200 1.900v4.800z" fill="#7f7f7f"/></svg>
<svg class="a" style="left:143.4px;top:42px;" width="8" height="8" viewBox="0 0 8 8"><path d="M5 .6h1.500v3.700H2.500" fill="none" stroke="#7f7f7f" stroke-width="1"/><path d="M.2 4.300L3.200 1.900v4.800z" fill="#7f7f7f"/></svg>
<svg class="a" style="left:240.5px;top:38px;" width="8" height="8" viewBox="0 0 8 8"><path d="M5 .6h1.500v3.700H2.500" fill="none" stroke="#7f7f7f" stroke-width="1"/><path d="M.2 4.300L3.200 1.900v4.800z" fill="#7f7f7f"/></svg>
<div class="a" style="left:9px;top:33px;width:25px;height:1px;border-top:1px dotted #fff;"></div>
<div class="a" style="left:9px;top:57px;width:25px;height:25px;background:#5b9bd5;"></div>
<div class="a" style="left:9px;top:57px;width:230px;height:1px;background:#5b9bd5;"></div>
<span class="t" style="left:17.3px;top:59.00px;font:700 15px/19px &quot;Liberation Sans&quot;,&quot;Noto Sans CJK JP&quot;,sans-serif;color:#fff;transform:scaleX(0.8207);">C</span>
<span class="t" style="left:42.5px;top:59.15px;font:400 14.7px/18.7px &quot;Liberation Sans&quot;,&quot;Noto Sans CJK JP&quot;,sans-serif;color:#222;transform:scaleX(0.9208);">45,700円</span>
<span class="t" style="left:113.1px;top:59.15px;font:400 14.7px/18.7px &quot;Liberation Sans&quot;,&quot;Noto Sans CJK JP&quot;,sans-serif;color:#222;transform:scaleX(1.0247);">5/25</span>
<svg class="a" style="left:27px;top:66px;" width="8" height="8" viewBox="0 0 8 8"><path d="M5 .6h1.500v3.700H2.500" fill="none" stroke="#777" stroke-width="1"/><path d="M.2 4.300L3.200 1.900v4.800z" fill="#777"/></svg>
<svg class="a" style="left:98px;top:66px;" width="8" height="8" viewBox="0 0 8 8"><path d="M5 .6h1.500v3.700H2.500" fill="none" stroke="#7f7f7f" stroke-width="1"/><path d="M.2 4.300L3.200 1.900v4.800z" fill="#7f7f7f"/></svg>
<svg class="a" style="left:143.4px;top:66px;" width="8" height="8" viewBox="0 0 8 8"><path d="M5 .6h1.500v3.700H2.500" fill="none" stroke="#7f7f7f" stroke-width="1"/><path d="M.2 4.300L3.200 1.900v4.800z" fill="#7f7f7f"/></svg>
<svg class="a" style="left:240.5px;top:62px;" width="8" height="8" viewBox="0 0 8 8"><path d="M5 .6h1.500v3.700H2.500" fill="none" stroke="#7f7f7f" stroke-width="1"/><path d="M.2 4.300L3.200 1.900v4.800z" fill="#7f7f7f"/></svg>
<div class="a" style="left:9px;top:57px;width:25px;height:1px;border-top:1px dotted #fff;"></div>
<div class="a" style="left:9px;top:9px;width:1px;height:60px;border-left:1px dashed #8a8a8a;"></div>
<div class="a" style="left:33px;top:9px;width:1px;height:60px;border-left:1px dashed #8a8a8a;"></div>
<div class="a" style="left:104px;top:9px;width:1px;height:60px;border-left:1px dashed #8a8a8a;"></div>
<div class="a" style="left:238px;top:9px;width:1px;height:60px;border-left:1px dashed #8a8a8a;"></div>
</div>
<svg class="a" style="left:874.5px;top:306px;" width="8" height="5" viewBox="0 0 8 5"><path d="M0 4.500h8L4 .5z" fill="#606060"/></svg>
<svg class="a" style="left:874.5px;top:577px;" width="8" height="5" viewBox="0 0 8 5"><path d="M0 .5h8L4 4.500z" fill="#606060"/></svg>
</main>
</body></html>
